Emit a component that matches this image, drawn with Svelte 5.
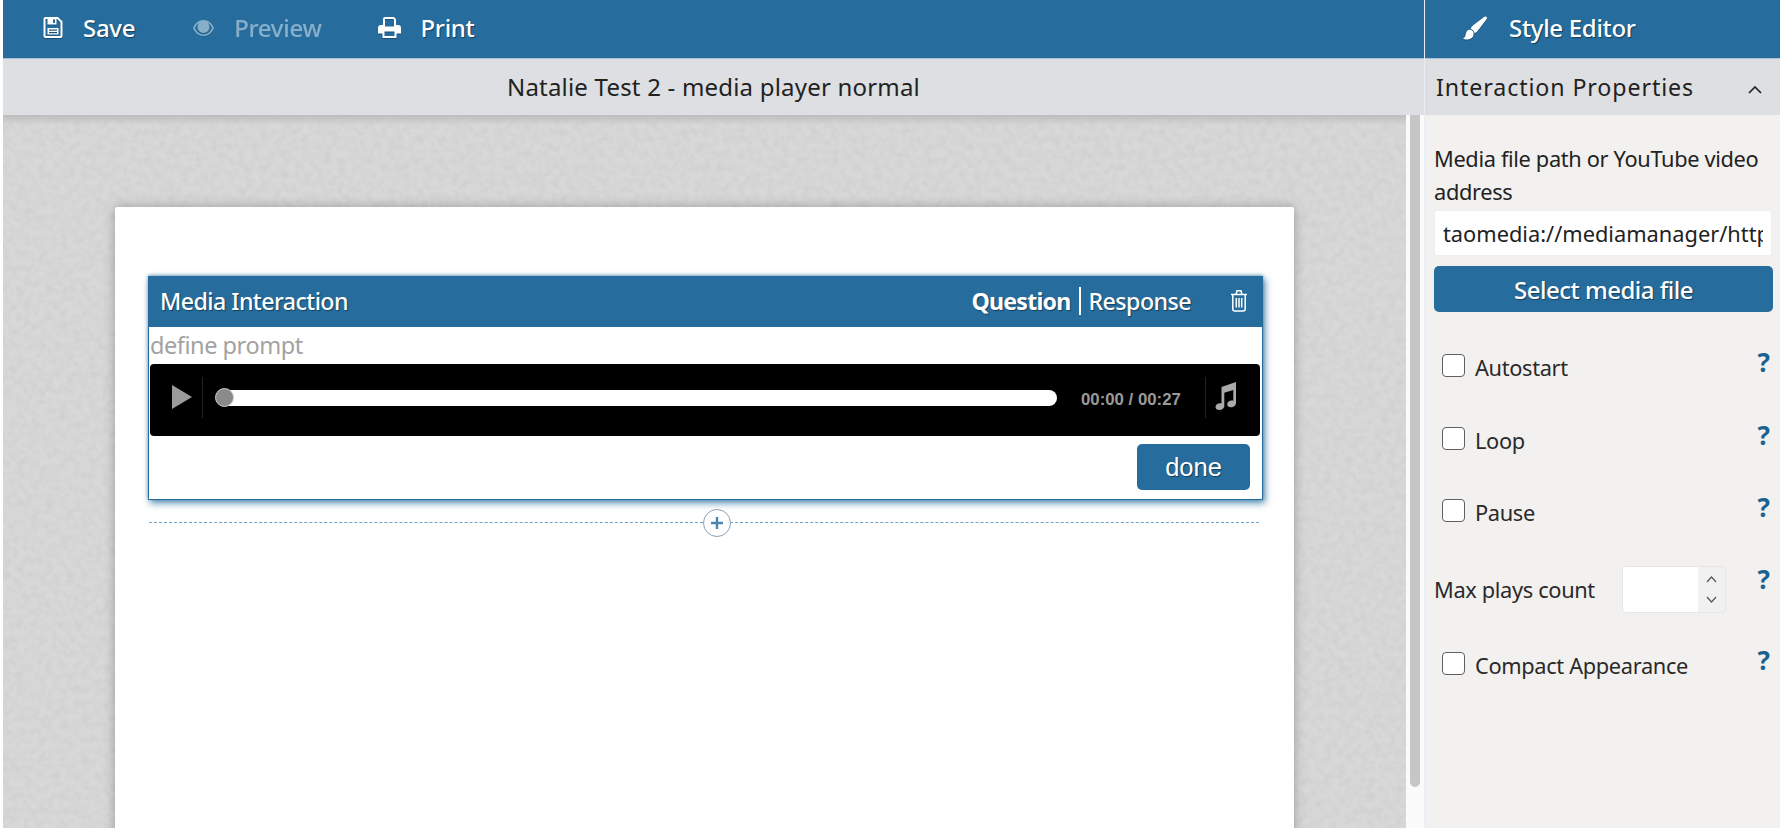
<script>
  const checks = ['Autostart', 'Loop', 'Pause'];
</script>

<div class="page">
  <div class="main">
    <header class="bar">
      <button class="tool">
        <svg class="ic save" width="20" height="21" viewBox="0 0 19 21"><path fill="#fff" fill-rule="evenodd" d="M2 0h12.500L19 4.500V19a2 2 0 0 1-2 2H2a2 2 0 0 1-2-2V2a2 2 0 0 1 2-2zM2 2v17h15V5.300L13.700 2H13v5.500H4V2zM9.500 2.500v3.500h2V2.500zM4 11h11v6.500H4zM5.500 12.500v1.200h8v-1.200zM5.500 15v1.200h8V15z"/></svg>
        <span>Save</span>
      </button>
      <button class="tool off">
        <svg class="ic" width="23" height="16" viewBox="0 0 21 16"><path fill="#fff" fill-rule="evenodd" d="M10.500 0C15 0 19 3 21 8c-2 5-6 8-10.500 8S2 13 0 8c2-5 6-8 10.500-8zM1.800 8c1.700 3.800 5 6.500 8.700 6.500s7-2.700 8.700-6.500c-1-2.300-2.600-4.100-4.500-5.300a6 6 0 1 1-8.400 0C4.400 3.900 2.800 5.700 1.800 8z"/></svg>
        <span>Preview</span>
      </button>
      <button class="tool">
        <svg class="ic" width="23" height="21" viewBox="0 0 23 21"><path fill="#fff" fill-rule="evenodd" d="M7 0h8c1.500 0 3 1.500 3 3v5h2a3 3 0 0 1 3 3v5.500h-4.500V21H4.500v-4.500H0V11a3 3 0 0 1 3-3h2V2a2 2 0 0 1 2-2zM7 2v7.500h9V3c0-.5-.5-1-1-1zM6.500 14.500V19h10v-4.500z"/></svg>
        <span>Print</span>
      </button>
    </header>
    <div class="title">Natalie Test 2 - media player normal</div>
    <div class="stage">
      <div class="canvas">
        <svg class="grain" aria-hidden="true">
          <filter id="grainf"><feTurbulence type="fractalNoise" baseFrequency="0.14" numOctaves="3" seed="7" /><feColorMatrix values="0 0 0 0 .55 0 0 0 0 .55 0 0 0 0 .55 .8 0 0 0 -.28" /></filter>
          <rect width="100%" height="100%" filter="url(#grainf)" />
        </svg>
        <div class="sheet">
          <section class="inter">
            <div class="ihead">
              <span class="iname">Media Interaction</span>
              <span class="modes"><b>Question</b><i></i><span>Response</span></span>
              <svg class="trash" width="18" height="23" viewBox="0 0 18 23"><path fill="none" stroke="#fff" stroke-width="1.500" d="M1 5.500h16M2.800 5.500V20a2 2 0 0 0 2 2h8.400a2 2 0 0 0 2-2V5.500M6 5.500 7 1.800h4l1 3.700M6.300 9v9.500M9 9v9.500M11.700 9v9.500"/></svg>
            </div>
            <div class="prompt">define prompt</div>
            <div class="player">
              <svg class="play" width="20" height="24" viewBox="0 0 20 24"><path fill="#9b9b9b" d="M0 0l20 12L0 24z"/></svg>
              <span class="sep"></span>
              <div class="track"><span class="knob"></span></div>
              <span class="time">00:00 / 00:27</span>
              <span class="sep"></span>
              <svg class="music" width="21" height="28" viewBox="0 0 21 28"><path fill="#aaa" d="M6.500 5 21 0v21c0 2.400-2.400 4.300-5 4.300-2.300 0-3.800-1.300-3.800-3.100 0-2 2.100-3.700 4.500-3.700.6 0 1.100.1 1.600.3V8L9.300 10.800V24c0 2.200-2.400 4-5 4C2 28 .5 26.700.5 25c0-2 2.100-3.700 4.500-3.700.6 0 1 .1 1.500.3z"/></svg>
            </div>
            <div class="foot"><button class="done">done</button></div>
          </section>
          <div class="adder">
            <span class="plus"><svg width="14" height="14" viewBox="0 0 14 14"><path stroke="#4a85ad" stroke-width="2.400" d="M7 1v12M1 7h12"/></svg></span>
          </div>
        </div>
      </div>
      <div class="track-v"><span class="thumb"></span></div>
    </div>
  </div>

  <aside class="side">
    <header class="bar sbar">
      <button class="tool">
        <svg class="ic" width="24" height="24" viewBox="0 0 26 25"><path fill="#fff" d="M25.500.500c.6.500.6 1.500 0 2.500L16 15.500c-1 1.200-2 2-3.500 2.500-.3-2.200-2-4-4.200-4.500.5-1.500 1.300-2.800 2.500-3.800L22.500.8c1.200-.9 2.300-.9 3-.3zM7 14.500c2.500 0 4.500 1.800 4.500 4.200C11.500 22.500 8 25 3.500 25 2 25 .8 24.700 0 24c1.800-1 2.500-2 3-4.500.5-2.800 2-5 4-5z"/></svg>
        <span>Style Editor</span>
      </button>
    </header>
    <div class="phead">
      <span>Interaction Properties</span>
      <svg width="14" height="8" viewBox="0 0 14 8"><path fill="none" stroke="#222" stroke-width="1.700" d="M1 7l6-6 6 6"/></svg>
    </div>
    <div class="pbody">
      <label class="fieldlabel" for="mediapath">Media file path or YouTube video address</label>
      <input id="mediapath" class="path" value="taomedia://mediamanager/https_2_media" readonly />
      <button class="select">Select media file</button>

      {#each checks as c}
        <div class="row">
          <span class="box"></span>
          <span class="lab">{c}</span>
          <span class="q">?</span>
        </div>
      {/each}

      <div class="row maxrow">
        <span class="maxlab">Max plays count</span>
        <span class="spin">
          <span class="spinfield"></span>
          <span class="arrows">
            <svg width="11" height="7" viewBox="0 0 11 7"><path fill="none" stroke="#555" stroke-width="1.200" d="M1 6l4.500-5L10 6"/></svg>
            <svg width="11" height="7" viewBox="0 0 11 7"><path fill="none" stroke="#555" stroke-width="1.200" d="M1 1l4.500 5L10 1"/></svg>
          </span>
        </span>
        <span class="q">?</span>
      </div>

      <div class="row">
        <span class="box"></span>
        <span class="lab">Compact Appearance</span>
        <span class="q">?</span>
      </div>
    </div>
  </aside>
</div>

<style>
  :global(body) { margin: 0; background: #fff; }
  button { font: inherit; border: 0; background: none; color: inherit; padding: 0; }

  .page {
    display: flex;
    width: 1780px;
    height: 828px;
    overflow: hidden;
    font-family: "Noto Sans", sans-serif;
    color: #222;
  }
  .main {
    flex: 0 0 1422px;
    box-sizing: border-box;
    margin-left: 3px;
    display: flex;
    flex-direction: column;
    border-right: 1px solid #e8eef3;
  }
  .bar {
    height: 58px;
    box-sizing: content-box;
    flex: none;
    background: #266d9d;
    border-bottom: 1px solid #a9c2d5;
    display: flex;
    align-items: center;
    padding-left: 40px;
    gap: 57px;
    color: #fff;
  }
  .tool {
    display: flex;
    align-items: center;
    gap: 19px;
    font-size: 24px;
    font-weight: 500;
    letter-spacing: -0.3px;
    text-shadow: 1px 1px 1px #143f5e;
    color: #fff;
    margin-top: -3px;
  }
  .tool.off { opacity: .45; text-shadow: none; }
  .ic { filter: drop-shadow(0 1px 0 #1a5078); flex: none; }
  .save { margin-right: 1px; }

  .title {
    height: 56px;
    flex: none;
    background: #dddfe3;
    display: flex;
    align-items: center;
    justify-content: center;
    font-size: 24px;
    letter-spacing: 0.2px;
    padding-bottom: 2px;
    box-sizing: border-box;
  }

  .stage { flex: 1; display: flex; min-height: 0; }
  .canvas {
    position: relative;
    flex: 1;
    background: #d8d8d8;
    overflow: hidden;
    padding: 92px 0 0 112px;
  }
  .canvas::before {
    content: "";
    position: absolute;
    inset: 0 0 auto 0;
    height: 10px;
    background: linear-gradient(#bdbdbd, rgba(189, 189, 189, 0));
    z-index: 1;
  }
  .grain { position: absolute; inset: 0; width: 100%; height: 100%; }
  .track-v { flex: 0 0 18px; box-sizing: border-box; background: #fbfbfb; padding: 0 4px 0 4px; }
  .thumb { display: block; height: 672px; background: #c6c6c6; border-radius: 0 0 5px 5px; }

  .sheet {
    position: relative;
    width: 1179px;
    height: 700px;
    background: #fff;
    box-sizing: border-box;
    padding: 69px 34px 0 33px;
    box-shadow: 0 0 12px rgba(0, 0, 0, .28);
    border-radius: 2px 2px 0 0;
  }
  .inter {
    width: 1115px;
    box-sizing: border-box;
    border: 1px solid #266d9d;
    border-top: 0;
    box-shadow: 2px 3px 7px rgba(38, 109, 157, .8), 0 -1px 3px rgba(38, 109, 157, .5);
    background: #fff;
  }
  .ihead {
    height: 51px;
    box-sizing: border-box;
    padding: 0 14px 2px 11px;
    background: #266d9d;
    color: #fff;
    display: flex;
    align-items: center;
    font-size: 23.200px;
    font-weight: 500;
    letter-spacing: -0.55px;
    text-shadow: 1px 1px 1px #143f5e;
  }
  .iname { flex: 1; }
  .modes { display: flex; align-items: center; }
  .modes b { font-weight: 700; letter-spacing: -0.8px; }
  .modes i { width: 2px; height: 28px; background: #fff; margin: 0 8px; }
  .trash { margin-left: 39px; }
  .prompt {
    height: 37px;
    line-height: 36px;
    color: #a2a2a2;
    font-size: 23.500px;
    letter-spacing: -0.45px;
    padding-left: 1px;
  }
  .player {
    height: 72px;
    width: 1110px;
    margin-left: 1px;
    background: #000;
    border-radius: 4px;
    display: flex;
    align-items: center;
    padding-left: 22px;
    box-sizing: border-box;
  }
  .play { flex: none; margin: -6px 0 0; }
  .sep { width: 1px; height: 41px; background: #222; flex: none; margin: -6px 0 0 10px; }
  .track {
    position: relative;
    width: 833px;
    height: 16px;
    background: #fff;
    border-radius: 0 8px 8px 0;
    margin: -4px 0 0 21px;
  }
  .knob {
    position: absolute;
    left: -9px;
    top: -2px;
    width: 19px;
    height: 19px;
    box-sizing: border-box;
    border-radius: 50%;
    background: #8a8a8a;
    border: 1px solid #ccc;
  }
  .time {
    font: 700 16.800px "Liberation Sans", sans-serif;
    color: #9a9a9a;
    margin-left: 24px;
    width: 114px;
    white-space: nowrap;
  }
  .music { flex: none; margin: -8px 0 0 9px; }
  .foot { height: 63px; display: flex; justify-content: flex-end; padding: 8px 12px 0 0; box-sizing: border-box; }
  .done {
    width: 113px;
    height: 46px;
    background: #266d9d;
    color: #fff;
    border-radius: 5px;
    font: 400 25.500px "Liberation Sans", sans-serif;
    text-shadow: 1px 1px 1px #143f5e;
  }

  .adder {
    position: relative;
    width: 1110px;
    margin: 22px 0 0 1px;
    border-top: 1px dashed #6fa3c5;
    display: flex;
    justify-content: center;
  }
  .plus {
    position: absolute;
    left: 554px;
    top: -14px;
    width: 28px;
    height: 28px;
    box-sizing: border-box;
    border: 1px solid #8aa1b3;
    border-radius: 50%;
    background: #fff;
    display: flex;
    align-items: center;
    justify-content: center;
  }

  .side { flex: 1; display: flex; flex-direction: column; background: #f2f1ef; }
  .sbar { padding-left: 38px; }
  .sbar .tool { gap: 22px; }
  .phead {
    height: 56px;
    flex: none;
    background: #dddfe3;
    display: flex;
    align-items: center;
    justify-content: space-between;
    padding: 0 18px 0 11px;
    font-size: 23.200px;
    letter-spacing: 0.9px;
  }
  .phead svg { margin-top: 5px; }
  .pbody {
    padding: 27px 7px 0 9px;
    font-size: 21.800px;
    letter-spacing: -0.35px;
  }
  .fieldlabel { display: block; line-height: 33px; }
  .path {
    display: block;
    width: 338px;
    height: 46px;
    box-sizing: border-box;
    margin-top: 2px;
    border: 1px solid #eee;
    border-radius: 3px;
    background: #fff;
    padding: 0 8px;
    font: inherit;
    color: #222;
    outline: 0;
  }
  .select {
    display: block;
    width: 339px;
    height: 46px;
    margin: 10px 0 42px;
    background: #266d9d;
    color: #fff;
    border-radius: 5px;
    font-size: 24px;
    font-weight: 500;
    letter-spacing: -0.5px;
    text-shadow: 1px 1px 1px #143f5e;
  }
  .row {
    position: relative;
    height: 72.500px;
    display: flex;
    align-items: flex-start;
    padding-left: 8px;
    box-sizing: border-box;
    color: #2a2a2a;
  }
  .box {
    width: 23px;
    height: 23px;
    box-sizing: border-box;
    border: 1.500px solid #5f5f5f;
    border-radius: 4px;
    background: #fff;
    flex: none;
  }
  .lab { margin-left: 10px; line-height: 28px; }
  .q {
    position: absolute;
    right: 3px;
    top: -5px;
    font: 700 26px "Noto Sans", sans-serif;
    color: #1d6191;
    line-height: 26px;
    letter-spacing: 0;
  }
  .maxrow { padding-left: 0; margin-top: -5.500px; height: 86px; }
  .maxrow .q { top: 0; }
  .maxlab { line-height: 47px; width: 188px; }
  .spin {
    display: flex;
    width: 104px;
    height: 47px;
    box-sizing: border-box;
    border: 1px solid #e6e6e6;
    border-radius: 4px;
    background: #f1f1f1;
  }
  .spinfield { width: 75px; background: #fff; border-radius: 3px 0 0 3px; }
  .arrows { flex: 1; display: flex; flex-direction: column; align-items: center; justify-content: center; gap: 13px; }
</style>
